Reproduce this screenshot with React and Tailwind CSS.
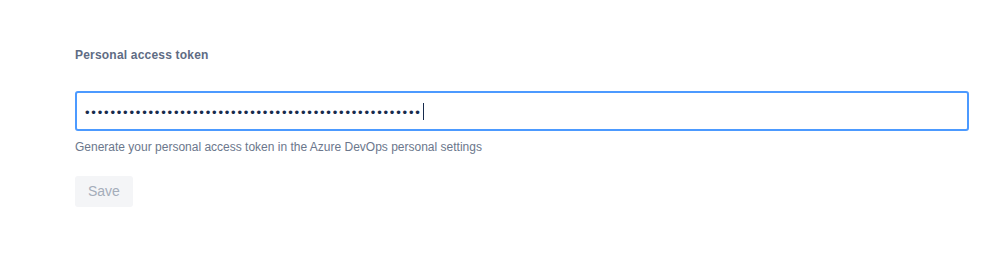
import React from "react";

const font = { fontFamily: '"Liberation Sans", Arial, sans-serif' };

const TokenSettings = () => {
  const masked = "•".repeat(53);

  return (
    <div className="min-h-screen bg-white pt-[47px] pl-[75px] pr-[30px]" style={font}>
      <label className="block text-[12px] leading-4 font-bold tracking-[0.2px] text-[#5e6c84]">
        Personal access token
      </label>
      <div className="mt-[28px] flex h-[40px] w-full items-center rounded-[3px] border-2 border-[#4c9aff] bg-white px-[8px]">
        <span className="pt-[3px] text-[13px] leading-none tracking-[1.8px] text-[#172b4d]">
          {masked}
        </span>
        <span className="ml-[1px] h-[17px] w-[1.5px] bg-[#172b4d]" />
      </div>
      <p className="mt-[8px] text-[12px] leading-4 text-[#6b778c]">
        Generate your personal access token in the Azure DevOps personal
        settings
      </p>
      <button
        disabled
        className="mt-[21px] h-[31px] rounded-[3px] bg-[#f4f5f7] px-[13px] text-[14px] font-medium text-[#a5adba]"
      >
        Save
      </button>
    </div>
  );
};

export default function App() {
  return <TokenSettings />;
}
